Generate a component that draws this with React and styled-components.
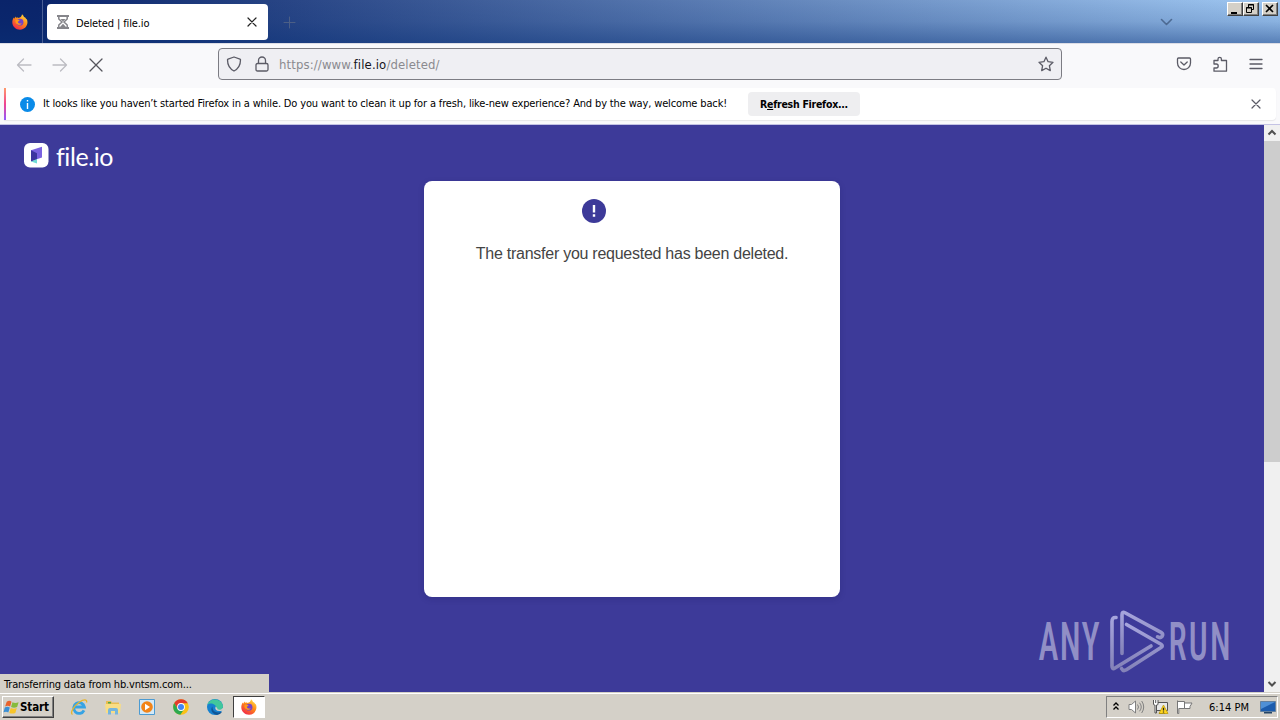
import React from 'react'
import styled, { createGlobalStyle } from 'styled-components'

const GlobalStyle = createGlobalStyle`
  * { box-sizing: border-box; }
  body { margin: 0; overflow: hidden; }
`

const Screen = styled.div`
  width: 1280px;
  height: 720px;
  display: flex;
  flex-direction: column;
  font-family: "DejaVu Sans Condensed", "DejaVu Sans", sans-serif;
  font-stretch: condensed;
  font-size: 11px;
  color: #000;
  white-space: nowrap;
`

/* ---- tab strip ---- */
const TabStrip = styled.div`
  height: 43px;
  flex: none;
  display: flex;
  background: linear-gradient(180deg, rgba(10, 50, 120, 0) 0%, rgba(10, 50, 120, 0.15) 50%, rgba(10, 50, 120, 0.48) 100%),
    linear-gradient(90deg, #0a246a 0%, #0a246a 3%, #a0c8f2 100%);
`
const FirefoxView = styled.div`
  width: 43px;
  border-right: 1px solid #4a5f95;
  padding: 14px 0 0 12px;
`
const Tab = styled.div`
  width: 221px;
  height: 36px;
  margin: 4px 0 0 4px;
  padding: 0 11px 0 9px;
  display: flex;
  align-items: center;
  background: #fff;
  border-radius: 4px;
`
const TabTitle = styled.span`
  flex: 1;
  margin-left: 6px;
  padding-top: 2px;
  letter-spacing: -0.12px;
`
const NewTab = styled.div`
  padding: 16px 0 0 15px;
  flex: 1;
`
const TabList = styled.div`
  padding: 16px 54px 0 0;
`
const WindowButtons = styled.div`
  display: flex;
  padding: 2px 2px 0 0;
`
const WindowButton = styled.div`
  width: 16px;
  height: 14px;
  margin-left: ${(props) => props.$gap || 0}px;
  background: #d4d0c8;
  border: 1px solid;
  border-color: #fff #404040 #404040 #fff;
  box-shadow: inset -1px -1px #808080;
  svg { display: block; }
`

/* ---- navigation ---- */
const NavBar = styled.div`
  height: 45px;
  flex: none;
  display: flex;
  background: #f9f9fb;
  border-top: 1px solid #dcdde5;
  padding: 4px 16px 0;
`
const NavButtons = styled.div`
  width: 202px;
  height: 34px;
  display: flex;
  align-items: center;
  gap: 20px;
`
const UrlBar = styled.div`
  width: 844px;
  height: 32px;
  display: flex;
  align-items: center;
  padding: 0 7px;
  background: #efeff3;
  border: 1px solid #7c7c83;
  border-radius: 4px;
`
const LockBox = styled.div`
  height: 16px;
  margin-left: 12px;
  svg { display: block; }
`
const Url = styled.span`
  flex: 1;
  margin-left: 9px;
  font-size: 13px;
  letter-spacing: 0.12px;
  color: #8a8a8f;
  b { font-weight: 400; color: #15141a; }
`
const NavTools = styled.div`
  flex: 1;
  height: 32px;
  display: flex;
  align-items: center;
  justify-content: flex-end;
  gap: 20px;
`

/* ---- notification ---- */
const NoticeArea = styled.div`
  height: 37px;
  flex: none;
  padding: 0 4px;
  background: #f9f9fb;
  border-bottom: 1px solid #c4c3e4;
`
const Notice = styled.div`
  height: 32px;
  display: flex;
  align-items: center;
  background: #fff;
  box-shadow: 0 1px 1px #e6e6e8;
  border-radius: 0 4px 4px 0;
  padding-right: 15px;
`
const NoticeStripe = styled.div`
  width: 2px;
  height: 32px;
  margin-right: 14px;
  background: linear-gradient(#ff9a6b, #f0438f 50%, #9059ff);
`
const NoticeText = styled.span`
  width: 705px;
  margin-left: 8px;
  padding-bottom: 2px;
  letter-spacing: -0.148px;
`
const RefreshButton = styled.div`
  width: 112px;
  height: 24px;
  line-height: 25px;
  text-align: center;
  background: #eeeef0;
  border-radius: 4px;
  font-weight: 700;
  font-size: 10.5px;
  letter-spacing: -0.27px;
`
const Spacer = styled.div`
  flex: 1;
`

/* ---- page ---- */
const Viewport = styled.div`
  position: relative;
  height: 567px;
  flex: none;
  display: flex;
`
const Page = styled.div`
  flex: 1;
  background: #3d3a99;
  padding: 17px 24px 0;
`
const Brand = styled.div`
  height: 39px;
  display: flex;
  align-items: flex-start;
`
const BrandName = styled.span`
  margin-left: 7px;
  font-family: Lato, sans-serif;
  font-size: 25px;
  line-height: 29px;
  letter-spacing: -0.4px;
  font-variant-ligatures: none;
  color: #fff;
`
const Card = styled.div`
  width: 416px;
  height: 416px;
  margin: 0 auto;
  padding-top: 18px;
  background: #fff;
  border-radius: 8px;
  box-shadow: 0 2px 6px rgba(20, 18, 80, 0.2);
  text-align: center;
`
const AlertBadge = styled.div`
  width: 24px;
  height: 24px;
  margin-left: 158px;
  svg { display: block; }
`
const Message = styled.p`
  margin: 21px 0 0;
  font-family: "Liberation Sans", Arial, sans-serif;
  font-size: 16px;
  line-height: 20px;
  letter-spacing: -0.26px;
  color: #444;
`
const ScrollBar = styled.div`
  width: 16px;
  display: flex;
  flex-direction: column;
  background: #f0f0f0;
`
const ScrollArrow = styled.div`
  height: 16px;
  flex: none;
  svg { display: block; }
`
const ScrollThumb = styled.div`
  height: 321px;
  background: #cdcdcd;
`
const StatusPanel = styled.div`
  position: absolute;
  left: 0;
  bottom: 0;
  width: 269px;
  height: 18px;
  padding-left: 4px;
  line-height: 21px;
  letter-spacing: -0.16px;
  background: #d4d0c8;
`
const Watermark = styled.svg`
  position: absolute;
  left: 1030px;
  top: 480px;
`

/* ---- taskbar ---- */
const TaskBar = styled.div`
  flex: 1;
  display: flex;
  background: #d4d0c8;
  border-top: 1px solid #d4d0c8;
  box-shadow: inset 0 1px #fff;
  padding: 3px 2px 0;
`
const StartButton = styled.div`
  width: 52px;
  height: 22px;
  display: flex;
  align-items: center;
  border: 1px solid;
  border-color: #fff #404040 #404040 #fff;
  box-shadow: inset -1px -1px #808080;
  font-weight: 700;
  font-size: 11.5px;
  letter-spacing: -0.1px;
`
const Launchers = styled.div`
  flex: 1;
  display: flex;
  margin-left: 8px;
`
const Launcher = styled.div`
  width: ${(props) => (props.$active ? 32 : 34)}px;
  height: 22px;
  display: flex;
  align-items: center;
  justify-content: center;
  ${(props) => props.$active && `
    margin-left: 1px;
    background: #fff;
    border: 1px solid;
    border-color: #404040 #fff #fff #404040;
  `}
`
const Tray = styled.div`
  width: 172px;
  height: 22px;
  display: flex;
  align-items: center;
  padding-left: 5px;
  border: 1px solid;
  border-color: #808080 #fff #fff #808080;
`
const TrayIcons = styled.div`
  display: flex;
  gap: 7px;
  margin-left: 8px;
`
const Clock = styled.span`
  width: 52px;
  margin-left: 15px;
  margin-right: -1px;
  letter-spacing: 0.02px;
`

const Line = ({ size = 16, color = '#5b5b66', width = 1.3, children }) => (
  <svg width={size} height={size} viewBox={`0 0 ${size} ${size}`} fill="none" stroke={color}
    strokeWidth={width} strokeLinecap="round" strokeLinejoin="round">
    {children}
  </svg>
)

const FirefoxIcon = ({ id }) => (
  <svg width="16" height="16" viewBox="0 0 16 16">
    <defs>
      <linearGradient id={id} x1="0.85" y1="0" x2="0.2" y2="1">
        <stop offset="0" stopColor="#ffe14a" />
        <stop offset="0.45" stopColor="#ff8a16" />
        <stop offset="1" stopColor="#f0204f" />
      </linearGradient>
    </defs>
    <path fill={`url(#${id})`} d="M10 .2c1 .8 1.700 1.800 2 2.800.8.2 1.600.9 2 1.700.2.2.6.5.9.9 2 4.600-1.500 10.200-6.900 10.200C3.800 15.800.3 12.600.3 8.300c0-2 .6-3.700 1.500-4.900l.4 1.300c.4-1 .9-1.700 1.700-2.200v1.400c1-.5 2-.4 2.700 0C8 3.700 9.800 2.600 10 .2z" />
    <circle cx="8" cy="8.200" r="3.400" fill="#7542c9" />
    <path fill="#ff9a1a" d="M3.400 6.200c1.400-1 2.800-.7 4.200 0-.3.900-1.500 1-1.800 1.700.8 1.700 2.600 1.900 4 1-.5 2-3.300 2.700-5 1.200-1.100-1-1.600-2.400-1.400-3.900z" />
  </svg>
)

const HourglassIcon = () => (
  <svg width="14" height="16" viewBox="0 0 14 16" fill="none" stroke="#85858a">
    <path strokeWidth="1.800" d="M1 2h12M1 14h12" />
    <path strokeWidth="1.500" d="M2.800 2.500v2.500L6 8l-3.200 3v2.500M11.200 2.500v2.500L8 8l3.200 3v2.500" />
    <path fill="#85858a" stroke="none" d="M4.500 5h5L7 7.600zM4 13l3-3.200 3 3.200z" />
  </svg>
)

const BrandIcon = () => (
  <svg width="25" height="26" viewBox="0 0 25 26">
    <rect width="24.500" height="24.500" y="1" rx="6" fill="#fff" />
    <path fill="#7a62e0" d="M7 8.200 18 4.800v10.700L12 17.500 7 16z" />
    <path fill="#3d35a0" d="m7 8.200 6 3v6.500L7 19.600z" />
    <path fill="#6fdad5" d="m7 19.500 6-2.500v4.500z" />
  </svg>
)

const AlertIcon = () => (
  <svg width="24" height="24" viewBox="0 0 24 24">
    <circle cx="12" cy="12" r="12" fill="#3d3a99" />
    <path stroke="#fff" strokeWidth="2.400" d="M12 6v7.500M12 15.300v2.500" />
  </svg>
)

const AnyRunMark = () => (
  <Watermark width="210" height="75" viewBox="0 0 210 75">
    <defs>
      <linearGradient id="mark" x1="0" y1="0" x2="0" y2="1">
        <stop offset="0" stopColor="#a6a5dc" />
        <stop offset="1" stopColor="#8482b8" />
      </linearGradient>
    </defs>
    <g fill="#918fc6" fontFamily="Roboto, sans-serif" fontSize="53" fontWeight="500">
      <text transform="translate(8.500 55) scale(.64 1)" letterSpacing="2">ANY</text>
      <text transform="translate(138.500 55) scale(.63 1)" letterSpacing="3.500">RUN</text>
    </g>
    <g fill="none" stroke="url(#mark)" strokeWidth="3.600" strokeLinejoin="round" strokeLinecap="round">
      <path d="M86 12.500q-4-.5-4 4V61q0 4 3 2l36-22" />
      <path d="M92 48.500V10q0-4 3-2.300l36.500 20q2 1.500 .5 3.800-1.800 2-4.500 .3" />
      <path d="M96.500 19.500L131 39.300q2.500 1.700 0 3.300L96 65q-3 1.500-4.500-1.500" />
    </g>
  </Watermark>
)

const StartFlag = () => (
  <svg width="17" height="17" viewBox="0 0 16 16">
    <path fill="#e8622c" d="M3.500 2.500q2.500-1.600 4.500 0L6.700 7Q4.500 5.800 2 7z" />
    <path fill="#86bb3c" d="M8.900 3q2.500 1.400 5.800 0l-1.400 4.500q-3 1.300-5.700 0z" />
    <path fill="#3b8fd4" d="M1.700 8q2.300-1.300 4.700 0L5 12.600Q3 11.300.5 12.500z" />
    <path fill="#f7c52b" d="M7.300 8.500q2.700 1.300 5.700 0l-1.400 4.600q-3 1.200-5.700 0z" />
  </svg>
)

const IeIcon = () => (
  <svg width="18" height="18" viewBox="0 0 18 18" fill="none">
    <path stroke="#36a3e4" strokeWidth="2.800" d="M14 12.300A5.400 5.400 0 1 1 14.400 9H5" />
    <path stroke="#e7b52d" strokeWidth="1.300" d="M2.500 16.500c-3-2 2-9 7-12.500 4-2.800 8-3 7 .5" />
  </svg>
)

const FolderIcon = () => (
  <svg width="18" height="18" viewBox="0 0 18 18">
    <path fill="#e9bd52" d="M2 3h5l1 1.500h7V14H2z" />
    <path fill="#f8dd85" d="M1 6h16l-1 9H2z" />
    <path fill="#75b5dd" d="M4 16.500v-4.500q0-2 2-2h6q2 0 2 2v4.500h-3v-3.500H7v3.500z" />
    <path fill="#52a843" d="M4 4h3v1.500H4z" />
  </svg>
)

const PlayerIcon = () => (
  <svg width="18" height="18" viewBox="0 0 18 18">
    <path fill="#d4e9f7" stroke="#4c9bd2" d="M1.500 1.500h15v15h-15z" />
    <circle cx="9" cy="9" r="5.800" fill="#f28418" />
    <path fill="#fff" d="m7 5.800 5 3.200-5 3.200z" />
  </svg>
)

const ChromeIcon = () => (
  <svg width="16" height="16" viewBox="0 0 16 16">
    <circle cx="8" cy="8" r="7.800" fill="#fbc116" />
    <path fill="#e33b2e" d="M1.200 4.100A7.800 7.800 0 0 1 14.800 4.200H8L4.700 10z" />
    <path fill="#2da94f" d="M1.200 4.100A7.800 7.800 0 0 0 7.300 15.800L11.300 10H4.700z" />
    <circle cx="8" cy="8" r="3.900" fill="#fff" />
    <circle cx="8" cy="8" r="3" fill="#4285f4" />
  </svg>
)

const EdgeIcon = () => (
  <svg width="18" height="18" viewBox="0 0 18 18">
    <circle cx="9" cy="9" r="8" fill="#1580cf" />
    <path fill="#42c79c" d="M1.500 7C3-.5 15.500-.5 17 8q.2 4-4 4-3 0-2.500-2C10 6 4 4 1.500 7z" />
    <path fill="#105596" d="M6.500 8.500c-3 3 0 8 4.500 8.400 2-.2 4-1.500 5-3.200-5 2-10 0-9.500-5.200z" />
    <path fill="#d4d0c8" d="M9.500 8.500q-1.500 5.500 6.700 4.200L18 12V9l-3 2.500q-4 .7-4-1.700z" />
  </svg>
)

const SpeakerIcon = () => (
  <svg width="17" height="16" viewBox="0 0 17 16" fill="none" stroke="#808080">
    <path fill="#fff" d="M1 5.500h2.500L7.500 2v12l-4-3.500H1z" />
    <path d="M9.500 5.500q2 2.500 0 5M11.500 3.700q3.500 4.300 0 8.600M13.700 2q4 6 0 12" />
  </svg>
)

const NetworkIcon = () => (
  <svg width="17" height="16" viewBox="0 0 17 16">
    <path fill="#e8e8e8" stroke="#555" d="M4.500 3.500h11v8h-11zM7 14.500h6" />
    <path fill="#fff" stroke="#555" d="M1.500 1v4q0 1 1 1H3v8h1.500V6H5q1 0 1-1V1M3.700 1v3" />
    <path fill="#ffd51f" stroke="#b89500" strokeWidth=".7" d="M11.500 6 16 14.500H7z" />
    <path stroke="#222" strokeWidth="1.300" d="M11.500 8.800v2.700M11.500 12.400v1.100" />
  </svg>
)

const ActionFlagIcon = () => (
  <svg width="18" height="16" viewBox="0 0 18 16">
    <path fill="#fff" stroke="#777" d="M1.500 1.500v13h1.300V9.500h5.700V2.500H1.500M8.500 4H16l-2 3.500 0 2H8.500z" />
  </svg>
)

const DesktopIcon = () => (
  <svg width="16" height="14" viewBox="0 0 16 14">
    <path fill="#1c5cad" stroke="#63809e" d="M.5 1.500h15v10H.5z" />
    <path fill="#4f90d6" d="M1 2h14L1 9z" />
    <path fill="#244567" d="M4 12h8v1.500H4z" />
  </svg>
)

const TitleBar = () => (
  <TabStrip>
    <FirefoxView><FirefoxIcon id="foxTop" /></FirefoxView>
    <Tab>
      <HourglassIcon />
      <TabTitle>Deleted | file.io</TabTitle>
      <Line size={10} color="#222" width={1.2}><path d="M1 1l8 8M9 1L1 9" /></Line>
    </Tab>
    <NewTab>
      <Line size={13} color="#4c5f86" width={1}><path d="M6.500 1v11M1 6.500h11" /></Line>
    </NewTab>
    <TabList>
      <Line size={13} color="#4d6a92" width={1.6}><path d="M1.500 3.500l5 5 5-5" /></Line>
    </TabList>
    <WindowButtons>
      <WindowButton>
        <svg width="14" height="12"><path d="M3 9h6v2H3z" /></svg>
      </WindowButton>
      <WindowButton>
        <svg width="14" height="12" fill="none" stroke="#000">
          <path d="M4.500 4V1.500h5v5H8M4 2h6M2.500 4.500h5v5h-5zM2 5h6" />
        </svg>
      </WindowButton>
      <WindowButton $gap={3}>
        <svg width="14" height="12" stroke="#000" strokeWidth="1.600"><path d="M3 2l7 7M10 2L3 9" /></svg>
      </WindowButton>
    </WindowButtons>
  </TabStrip>
)

const Toolbar = () => (
  <NavBar>
    <NavButtons>
      <Line color="#bcbcc2"><path d="M15 8H1.500M7.500 2L1.500 8l6 6" /></Line>
      <Line color="#bcbcc2"><path d="M1 8h13.500M8.500 2l6 6-6 6" /></Line>
      <Line color="#55555c"><path d="M2 2l12 12M14 2L2 14" /></Line>
    </NavButtons>
    <UrlBar>
      <Line><path d="M8 1l6 2.200q.5 0 .5.600C14.500 9 12 13 8 15 4 13 1.500 9 1.500 3.800q0-.6.5-.6z" /></Line>
      <LockBox>
        <Line><path d="M3.500 7.500h9q1.500 0 1.500 1.500v4.500q0 1.500-1.500 1.500h-9Q2 15 2 13.500V9q0-1.500 1.500-1.500zM4.500 7V4.500a3.500 3.500 0 0 1 7 0V7" /></Line>
      </LockBox>
      <Url>https://www.<b>file.io</b>/deleted/</Url>
      <Line><path d="M8 1.200l2.100 4.500 4.900.6-3.600 3.400.9 4.900L8 12.200l-4.300 2.400.9-4.900L1 6.300l4.900-.6z" /></Line>
    </UrlBar>
    <NavTools>
      <Line><path d="M2.500 2h11q1 0 1 1v4a6.500 6.500 0 0 1-13 0V3q0-1 1-1zM4.800 6L8 9l3.200-3" /></Line>
      <Line><path d="M2 8V4.500h4V3a1.700 1.700 0 0 1 3.400 0v1.500h5.100v10.700H2V12h2.200a1.900 1.900 0 0 0 0-4z" /></Line>
      <Line><path d="M2 3.500h12M2 8h12M2 12.500h12" /></Line>
    </NavTools>
  </NavBar>
)

const RefreshNotice = () => (
  <NoticeArea>
    <Notice>
      <NoticeStripe />
      <svg width="15" height="15" viewBox="0 0 15 15">
        <circle cx="7.500" cy="7.500" r="7.500" fill="#0a8be8" />
        <path stroke="#fff" strokeWidth="1.400" d="M7.500 3v1.600M7.500 6v6" />
      </svg>
      <NoticeText>
        It looks like you haven’t started Firefox in a while. Do you want to clean it up for a fresh, like-new experience? And by the way, welcome back!
      </NoticeText>
      <RefreshButton>R<u>e</u>fresh Firefox...</RefreshButton>
      <Spacer />
      <Line size={10} width={1.2}><path d="M1 1l8 8M9 1L1 9" /></Line>
    </Notice>
  </NoticeArea>
)

const Content = () => (
  <Viewport>
    <Page>
      <Brand>
        <BrandIcon />
        <BrandName>file.io</BrandName>
      </Brand>
      <Card>
        <AlertBadge><AlertIcon /></AlertBadge>
        <Message>The transfer you requested has been deleted.</Message>
      </Card>
    </Page>
    <ScrollBar>
      <ScrollArrow>
        <svg width="16" height="16" fill="none" stroke="#505050" strokeWidth="2"><path d="M4.500 9.500L8 6l3.500 3.500" /></svg>
      </ScrollArrow>
      <ScrollThumb />
      <Spacer />
      <ScrollArrow>
        <svg width="16" height="16" fill="none" stroke="#505050" strokeWidth="2"><path d="M4.500 6L8 9.500 11.500 6" /></svg>
      </ScrollArrow>
    </ScrollBar>
    <AnyRunMark />
    <StatusPanel>Transferring data from hb.vntsm.com...</StatusPanel>
  </Viewport>
)

const Taskbar = () => (
  <TaskBar>
    <StartButton><StartFlag />Start</StartButton>
    <Launchers>
      <Launcher><IeIcon /></Launcher>
      <Launcher><FolderIcon /></Launcher>
      <Launcher><PlayerIcon /></Launcher>
      <Launcher><ChromeIcon /></Launcher>
      <Launcher><EdgeIcon /></Launcher>
      <Launcher $active><FirefoxIcon id="foxTask" /></Launcher>
    </Launchers>
    <Tray>
      <svg width="8" height="12" fill="none" stroke="#000" strokeWidth="1.300"><path d="M1.500 4.500L4 2l2.500 2.500M1.500 8.500L4 6l2.500 2.500" /></svg>
      <TrayIcons>
        <SpeakerIcon />
        <NetworkIcon />
        <ActionFlagIcon />
      </TrayIcons>
      <Clock>6:14 PM</Clock>
      <DesktopIcon />
    </Tray>
  </TaskBar>
)

const App = () => {
  return (
    <Screen>
      <GlobalStyle />
      <TitleBar />
      <Toolbar />
      <RefreshNotice />
      <Content />
      <Taskbar />
    </Screen>
  )
}

export default App
